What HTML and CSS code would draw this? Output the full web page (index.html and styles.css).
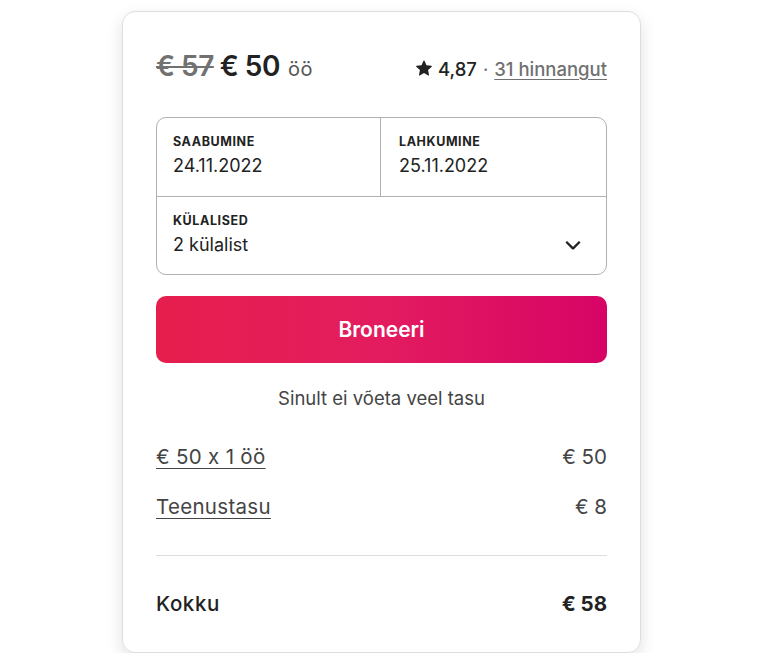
FILE: index.html
```html
<!DOCTYPE html>
<html lang="et">
<head>
<meta charset="utf-8">
<link rel="stylesheet" href="styles.css">
</head>
<body>
<div class="card">
  <div class="head">
    <div class="price">
      <span class="old">€ 57</span>
      <span class="now">€ 50</span>
      <span class="unit">öö</span>
    </div>
    <div class="rating">
      <svg class="star" viewBox="0 0 32 32" width="16" height="16"><path d="M15.1 1.58l-4.13 8.88-9.86 1.27a1 1 0 0 0-.54 1.74l7.3 6.57-1.97 9.850a1 1 0 0 0 1.48 1.06l8.62-5 8.63 5a1 1 0 0 0 1.48-1.06l-1.970-9.85 7.3-6.57a1 1 0 0 0-.55-1.73l-9.86-1.28-4.12-8.88a1 1 0 0 0-1.82 0z" fill="#222"/></svg>
      <span class="score">4,87</span>
      <span class="dot">·</span>
      <a class="reviews">31 hinnangut</a>
    </div>
  </div>

  <div class="picker">
    <div class="dates">
      <div class="field">
        <div class="label">SAABUMINE</div>
        <div class="value">24.11.2022</div>
      </div>
      <div class="field right">
        <div class="label">LAHKUMINE</div>
        <div class="value">25.11.2022</div>
      </div>
    </div>
    <div class="field guests">
      <div>
        <div class="label">KÜLALISED</div>
        <div class="value">2 külalist</div>
      </div>
      <svg class="chev" viewBox="0 0 32 32" width="18" height="18"><path d="M28 12L16.7 23.3a1 1 0 0 1-1.4 0L4 12" fill="none" stroke="#222" stroke-width="4"/></svg>
    </div>
  </div>

  <button class="book">Broneeri</button>
  <p class="note">Sinult ei võeta veel tasu</p>

  <div class="line"><a class="link">€ 50 x 1 öö</a><span>€ 50</span></div>
  <div class="line"><a class="link">Teenustasu</a><span>€ 8</span></div>
  <hr class="sep">
  <div class="line total"><span>Kokku</span><span class="sum">€ 58</span></div>
</div>
</body>
</html>
```

FILE: styles.css
```css
* { box-sizing: border-box; }
body {
  margin: 0;
  padding: 11px 0 0 122px;
  background: #fff;
  font-family: "Inter", "Noto Sans", sans-serif;
  font-feature-settings: "calt" 0;
  color: #222;
}
.card {
  width: 519px;
  height: 642px;
  border: 1px solid #dddddd;
  border-radius: 13px;
  box-shadow: 0 6px 16px rgba(0,0,0,0.12);
  padding: 33px 33px 0 33px;
}
.head {
  display: flex;
  justify-content: space-between;
  align-items: baseline;
  height: 52px;
  padding-top: 4px;
}
.price { display: flex; align-items: baseline; gap: 6px; }
.old {
  font-size: 28px;
  font-weight: 600;
  color: #717171;
  text-decoration: line-through;
  letter-spacing: -0.5px;
}
.now { font-size: 28px; font-weight: 600; color: #222; letter-spacing: -0.5px; }
.unit { font-size: 20px; color: #555; margin-left: 2px; letter-spacing: 0.5px; }
.rating { display: flex; align-items: baseline; gap: 6px; font-size: 18.5px; }
.star { align-self: center; position: relative; top: -1px; }
.score { font-weight: 500; }
.dot { color: #717171; }
.reviews { color: #717171; text-decoration: underline; text-underline-offset: 3px; font-weight: 500; }

.picker {
  margin-top: 20px;
  border: 1px solid #b0b0b0;
  border-radius: 10px;
  height: 158px;
  display: flex;
  flex-direction: column;
}
.dates { display: flex; height: 79px; border-bottom: 1px solid #b0b0b0; }
.field { padding: 16px 16px 0; flex: 1; }
.field.right { border-left: 1px solid #b0b0b0; padding-left: 18px; }
.label { font-size: 12.5px; font-weight: 700; letter-spacing: 0.6px; color: #222; }
.value { font-size: 18px; color: #222; margin-top: 6px; font-weight: 400; }
.guests { display: flex; justify-content: space-between; align-items: flex-start; padding-right: 24px; }
.chev { margin-top: 22px; }

.book {
  display: block;
  width: 100%;
  height: 67px;
  margin-top: 21px;
  border: none;
  border-radius: 10px;
  background: linear-gradient(to right, #e61e4d 0%, #e31c5f 50%, #d70466 100%);
  color: #fff;
  font-family: inherit;
  font-size: 21px;
  font-weight: 600;
}
.note {
  margin: 24px 0 0;
  text-align: center;
  font-size: 18.5px;
  color: #444;
}
.line {
  display: flex;
  justify-content: space-between;
  font-size: 20.5px;
  color: #444;
  line-height: 24px;
}
.note + .line { margin-top: 36px; }
.line + .line { margin-top: 26px; }
.link { text-decoration: underline; text-decoration-thickness: 1px; text-underline-offset: 4px; letter-spacing: 0.3px; }
.sep {
  border: none;
  border-top: 1px solid #dddddd;
  margin: 36px 0 0;
}
.total { margin-top: 36px; color: #222; font-weight: 500; }
.total > span:first-child { letter-spacing: 0.6px; }
.total .sum { font-weight: 700; }
```
